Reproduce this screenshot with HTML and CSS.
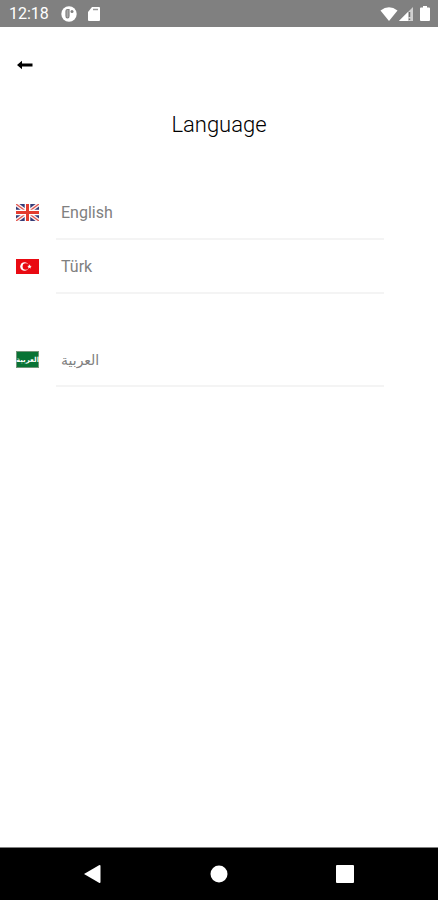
FILE: index.html
```html
<!DOCTYPE html>
<html lang="en">
<head>
<meta charset="utf-8">
<meta name="viewport" content="width=device-width, initial-scale=1">
<title>Language</title>
<link rel="stylesheet" href="styles.css">
</head>
<body>
<header class="status">
  <time class="clock">12:18</time>
  <svg class="notice" width="16" height="16" viewBox="0 0 16 16" aria-hidden="true"><circle cx="8" cy="8" r="7.700" fill="#fff"/><path d="M8 3.500H6.500Q5 3.500 5 5V10Q5 12 6.500 12T8 10z" fill="#a8a8a8" stroke="#808080" stroke-width="1.200"/><circle cx="11" cy="5.500" r="1.500" fill="#808080"/></svg>
  <svg class="card" width="12" height="14" viewBox="0 0 12 14" aria-hidden="true"><path d="M4 0h7q1 0 1 1v12q0 1-1 1H1q-1 0-1-1V5z" fill="#fff"/><path d="M5 2.500h5" stroke="#999" stroke-width="1.500"/></svg>
  <span class="spacer"></span>
  <svg width="18" height="14" viewBox="0 0 18 14" aria-hidden="true"><path d="M0.500 3.500Q9-3 17.500 3.500L9 14z" fill="#fff"/></svg>
  <svg class="signal" width="14" height="14" viewBox="0 0 14 14" aria-hidden="true"><path d="M14 0v14H0z" fill="#d0d0d0"/><path d="M9 5v9H0z" fill="#fff"/><path d="M10.500 5v5M10.500 11.500v1.500" stroke="#707070" stroke-width="1.500"/></svg>
  <svg class="battery" width="10" height="15" viewBox="0 0 10 15" aria-hidden="true"><path d="M3 0h4v1.500h2q1 0 1 1V14q0 1-1 1H1q-1 0-1-1V2.500q0-1 1-1h2z" fill="#fff"/></svg>
</header>
<main class="screen">
  <button class="back" type="button" aria-label="Back">
    <svg width="16" height="10" viewBox="0 0 16 10" aria-hidden="true"><path d="M0 5 5 .8V3.500H15.500V6.500H5V9.200z" fill="#000"/></svg>
  </button>
  <h1 class="title">Language</h1>
  <nav class="languages" aria-label="Language">
    <a class="row" href="#en">
      <svg class="flag" width="23" height="17" viewBox="0 0 23 17" aria-hidden="true"><rect width="23" height="17" rx="2" fill="#343c78"/><path d="M0 0 23 17M23 0 0 17" stroke="#fbeeee" stroke-width="4"/><path d="M0 0 23 17M23 0 0 17" stroke="#e2554f" stroke-width="1.300"/><path d="M11.500 0v17M0 8.500h23" stroke="#fff" stroke-width="5.600"/><path d="M11.500 0v17M0 8.500h23" stroke="#e33b2e" stroke-width="3"/></svg>
      <span class="name">English</span>
    </a>
    <a class="row" href="#tr">
      <svg class="flag" width="23" height="15" viewBox="0 0 23 15" aria-hidden="true"><rect width="23" height="15" fill="#e90a12"/><circle cx="8.500" cy="7.500" r="4.300" fill="#fff"/><circle cx="9.800" cy="7.500" r="3.200" fill="#e90a12"/><path d="m13.500 5.300.6 1.500 1.600.1-1.200 1 .4 1.600-1.400-.8-1.400.8.4-1.600-1.200-1 1.600-.1z" fill="#fff"/></svg>
      <span class="name">Türk</span>
    </a>
    <a class="row apart" href="#ar">
      <svg class="flag" width="23" height="17" viewBox="0 0 23 17" aria-hidden="true"><rect x=".5" y=".5" width="22" height="16" fill="#087334" stroke="#739579"/><text class="flag-text" x="11.500" y="11" text-anchor="middle">العربية</text></svg>
      <span class="name" lang="ar">العربية</span>
    </a>
  </nav>
</main>
<footer class="system">
  <button type="button" aria-label="Back"><svg width="18" height="20" viewBox="0 0 18 20" aria-hidden="true"><path d="M0 10 15 1.200Q16.500.5 16.500 2V18Q16.500 19.500 15 18.800z" fill="#fff"/></svg></button>
  <button type="button" aria-label="Home"><svg width="18" height="18" viewBox="0 0 18 18" aria-hidden="true"><circle cx="9" cy="9" r="8.500" fill="#fff"/></svg></button>
  <button type="button" aria-label="Overview"><svg width="18" height="18" viewBox="0 0 18 18" aria-hidden="true"><rect width="18" height="18" rx="1" fill="#fff"/></svg></button>
</footer>
</body>
</html>
```
FILE: styles.css
```css
* {
  box-sizing: border-box;
}

body {
  margin: 0;
  min-height: 100vh;
  display: flex;
  flex-direction: column;
  background: #fff;
  font-family: Roboto, "DejaVu Sans", sans-serif;
}

svg {
  display: block;
  flex: none;
}

button {
  padding: 0;
  border: 0;
  background: none;
}

.status {
  display: flex;
  align-items: center;
  height: 27px;
  padding: 0 8px 0 9px;
  background: #808080;
  color: #fff;
}

.clock {
  font-size: 16px;
  line-height: 28px;
}

.notice {
  margin-left: 12px;
}

.card {
  margin-left: 11px;
}

.spacer {
  flex: 1;
}

.signal {
  margin-left: 1px;
}

.battery {
  margin-left: 7px;
}

.screen {
  flex: 1;
}

.back {
  display: flex;
  align-items: center;
  height: 76px;
  padding: 0 17px;
}

.title {
  margin: 0;
  color: #000;
  font-size: 22px;
  font-weight: 300;
  line-height: 44px;
  text-align: center;
}

.languages {
  padding: 39px 54px 0 16px;
}

.row {
  display: grid;
  grid-template-columns: 40px 1fr;
  align-items: center;
  color: #808080;
  text-decoration: none;
}

.flag {
  margin-bottom: 2px;
}

.name {
  height: 54px;
  padding-left: 5px;
  border-bottom: 2px solid #f4f4f4;
  font-size: 16px;
  line-height: 54px;
}

.name:lang(ar) {
  font-size: 14px;
}

.apart {
  margin-top: 39px;
}

.flag-text {
  fill: #fff;
  font-family: "DejaVu Sans", sans-serif;
  font-size: 7px;
  font-weight: 700;
}

.system {
  display: grid;
  grid-template-columns: repeat(3, 126px);
  justify-content: center;
  height: 53px;
  border-top: 1px solid #808080;
  background: #000;
}

.system button {
  display: flex;
  align-items: center;
  justify-content: center;
}
```
